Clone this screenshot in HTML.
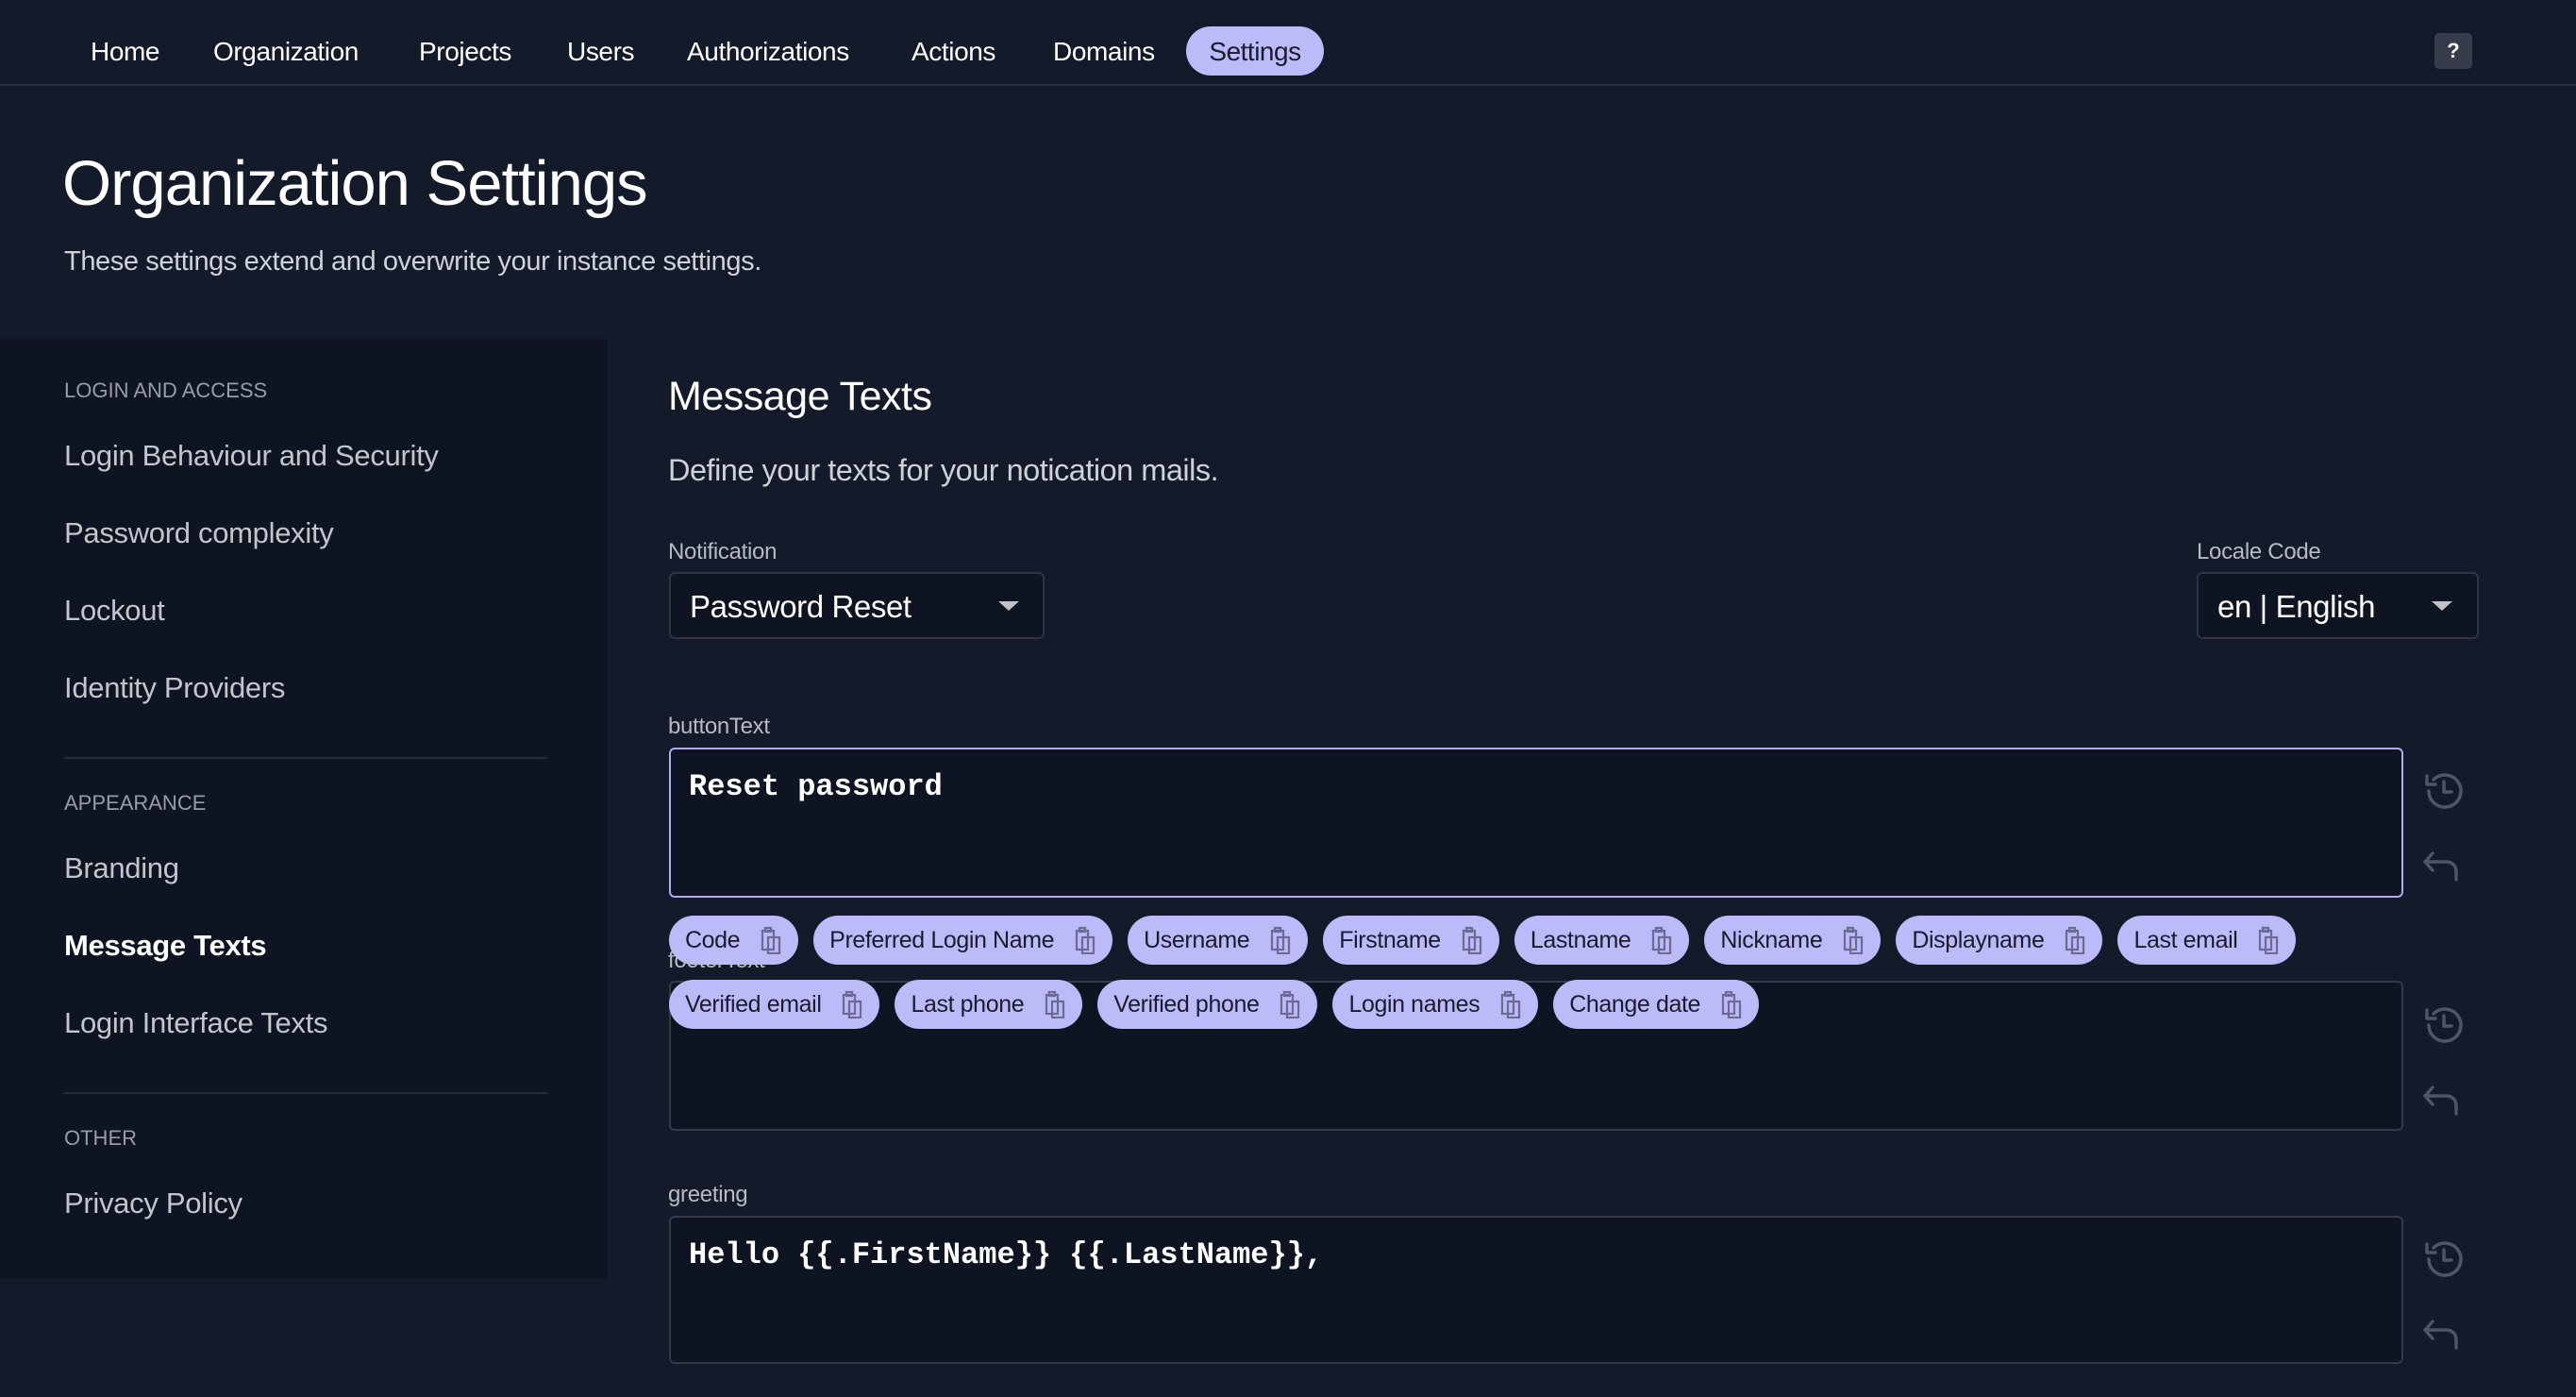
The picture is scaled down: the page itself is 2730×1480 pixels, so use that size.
<!DOCTYPE html>
<html><head><meta charset="utf-8"><style>
*{box-sizing:border-box;margin:0;padding:0}
body{width:2730px;height:1480px;background:#131a2a;color:#fff;font-family:"Liberation Sans",sans-serif;position:relative;overflow:hidden}
.a{position:absolute;white-space:nowrap}
.nav{left:0;top:0;width:2730px;height:91px;border-bottom:2px solid #2c3240}
.ni{font-size:28px;top:39px;color:#fff;letter-spacing:-0.4px}
.pill{left:1257px;top:28px;width:146px;height:52px;border-radius:26px;background:#bcbaf8;color:#1a1c2e;font-size:28px;text-align:center;line-height:54px;letter-spacing:-0.5px}
.q{left:2580px;top:35px;width:40px;height:38px;background:#363c4a;border-radius:5px;font-size:22px;text-align:center;line-height:38px;font-weight:bold}
.side{left:0;top:359px;width:644px;height:996px;background:#0f1422}
.sh{font-size:22px;color:#9a9ca5;left:68px}
.si{font-size:31px;color:#c3c5cb;left:68px;letter-spacing:-0.3px}
.div{left:68px;width:512px;height:2px;background:#252b38}
.lbl{font-size:24px;color:#b8bac0;letter-spacing:-0.3px}
.box{border:2px solid #2e3442;border-radius:6px;background:#0f1422}
.ta{left:709px;width:1838px;border:2px solid #333a48;border-radius:6px;background:#0f1422}
.mono{font-family:"Liberation Mono",monospace;font-weight:bold;font-size:32px;color:#fff}
.chips{left:709px;display:flex;gap:16px}
.chip{height:52px;border-radius:26px;background:#bcbaf8;color:#1a1c2e;font-size:25px;display:flex;align-items:center;padding:0 18px 0 17px;gap:22px;letter-spacing:-0.4px}
.chip svg{width:22px;height:30px}
</style></head><body>
<div class="a nav"></div>
<div class="a ni" style="left:96px">Home</div>
<div class="a ni" style="left:226px">Organization</div>
<div class="a ni" style="left:444px">Projects</div>
<div class="a ni" style="left:601px">Users</div>
<div class="a ni" style="left:728px">Authorizations</div>
<div class="a ni" style="left:966px">Actions</div>
<div class="a ni" style="left:1116px">Domains</div>
<div class="a pill">Settings</div>
<div class="a q">?</div>

<div class="a" style="left:66px;top:156px;font-size:67px;letter-spacing:-1px">Organization Settings</div>
<div class="a" style="left:68px;top:261px;font-size:29px;color:#d0d2d8;letter-spacing:-0.4px">These settings extend and overwrite your instance settings.</div>

<div class="a side"></div>
<div class="a sh" style="top:401px">LOGIN AND ACCESS</div>
<div class="a si" style="top:465px">Login Behaviour and Security</div>
<div class="a si" style="top:547px">Password complexity</div>
<div class="a si" style="top:629px">Lockout</div>
<div class="a si" style="top:711px">Identity Providers</div>
<div class="a div" style="top:802px"></div>
<div class="a sh" style="top:838px">APPEARANCE</div>
<div class="a si" style="top:902px">Branding</div>
<div class="a si" style="top:984px;color:#fff;font-weight:bold">Message Texts</div>
<div class="a si" style="top:1066px">Login Interface Texts</div>
<div class="a div" style="top:1157px"></div>
<div class="a sh" style="top:1193px">OTHER</div>
<div class="a si" style="top:1257px">Privacy Policy</div>

<div class="a" style="left:708px;top:396px;font-size:43px;letter-spacing:-0.5px">Message Texts</div>
<div class="a" style="left:708px;top:480px;font-size:32.5px;color:#cfd1d7;letter-spacing:-0.5px">Define your texts for your notication mails.</div>
<div class="a lbl" style="left:708px;top:571px">Notification</div>
<div class="a box" style="left:709px;top:606px;width:398px;height:71px"></div>
<div class="a" style="left:731px;top:624px;font-size:33px;letter-spacing:-0.4px">Password Reset</div>
<div class="a" style="left:1058px;top:637px;width:0;height:0;border-left:11px solid transparent;border-right:11px solid transparent;border-top:10px solid #c0c2c8"></div>
<div class="a lbl" style="left:2328px;top:571px">Locale Code</div>
<div class="a box" style="left:2328px;top:606px;width:299px;height:71px"></div>
<div class="a" style="left:2350px;top:624px;font-size:33px;letter-spacing:-0.4px">en | English</div>
<div class="a" style="left:2577px;top:637px;width:0;height:0;border-left:11px solid transparent;border-right:11px solid transparent;border-top:10px solid #c0c2c8"></div>

<div class="a lbl" style="left:708px;top:756px">buttonText</div>
<div class="a ta" style="top:792px;height:159px;border-color:#aeacf0"></div>
<div class="a mono" style="left:730px;top:815px">Reset password</div>

<div class="a lbl" style="left:708px;top:1004px">footerText</div>
<div class="a ta" style="top:1039px;height:159px"></div>

<div class="a lbl" style="left:708px;top:1252px">greeting</div>
<div class="a ta" style="top:1288px;height:157px"></div>
<div class="a mono" style="left:730px;top:1311px">Hello {{.FirstName}} {{.LastName}},</div>

<svg class="a" style="left:0;top:0" width="2730" height="1480" fill="none" stroke="#4f5562" stroke-width="3.5" stroke-linecap="round" stroke-linejoin="round">
<g id="h"><path d="M2574 838a17 17 0 1 0 5-12"/><path d="M2572 822v9h9"/><path d="M2590 828v11h8"/></g>
<g id="u"><path d="M2578 904l-8 9 8 9"/><path d="M2571 913h22a10 10 0 0 1 10 10v9"/></g>
<use href="#h" y="248"/><use href="#u" y="248"/><use href="#h" y="496"/><use href="#u" y="496"/>
</svg>

<div class="a chips" style="top:970px">
<div class="chip">Code<svg viewBox="0 0 22 30"><g fill="none" stroke="#6d6b94" stroke-width="2.2"><rect x="2" y="5" width="12" height="20"/><rect x="8" y="12" width="12" height="17"/><rect x="5" y="2" width="6" height="4"/></g></svg></div>
<div class="chip">Preferred Login Name<svg viewBox="0 0 22 30"><g fill="none" stroke="#6d6b94" stroke-width="2.2"><rect x="2" y="5" width="12" height="20"/><rect x="8" y="12" width="12" height="17"/><rect x="5" y="2" width="6" height="4"/></g></svg></div>
<div class="chip">Username<svg viewBox="0 0 22 30"><g fill="none" stroke="#6d6b94" stroke-width="2.2"><rect x="2" y="5" width="12" height="20"/><rect x="8" y="12" width="12" height="17"/><rect x="5" y="2" width="6" height="4"/></g></svg></div>
<div class="chip">Firstname<svg viewBox="0 0 22 30"><g fill="none" stroke="#6d6b94" stroke-width="2.2"><rect x="2" y="5" width="12" height="20"/><rect x="8" y="12" width="12" height="17"/><rect x="5" y="2" width="6" height="4"/></g></svg></div>
<div class="chip">Lastname<svg viewBox="0 0 22 30"><g fill="none" stroke="#6d6b94" stroke-width="2.2"><rect x="2" y="5" width="12" height="20"/><rect x="8" y="12" width="12" height="17"/><rect x="5" y="2" width="6" height="4"/></g></svg></div>
<div class="chip">Nickname<svg viewBox="0 0 22 30"><g fill="none" stroke="#6d6b94" stroke-width="2.2"><rect x="2" y="5" width="12" height="20"/><rect x="8" y="12" width="12" height="17"/><rect x="5" y="2" width="6" height="4"/></g></svg></div>
<div class="chip">Displayname<svg viewBox="0 0 22 30"><g fill="none" stroke="#6d6b94" stroke-width="2.2"><rect x="2" y="5" width="12" height="20"/><rect x="8" y="12" width="12" height="17"/><rect x="5" y="2" width="6" height="4"/></g></svg></div>
<div class="chip">Last email<svg viewBox="0 0 22 30"><g fill="none" stroke="#6d6b94" stroke-width="2.2"><rect x="2" y="5" width="12" height="20"/><rect x="8" y="12" width="12" height="17"/><rect x="5" y="2" width="6" height="4"/></g></svg></div>
</div>
<div class="a chips" style="top:1038px">
<div class="chip">Verified email<svg viewBox="0 0 22 30"><g fill="none" stroke="#6d6b94" stroke-width="2.2"><rect x="2" y="5" width="12" height="20"/><rect x="8" y="12" width="12" height="17"/><rect x="5" y="2" width="6" height="4"/></g></svg></div>
<div class="chip">Last phone<svg viewBox="0 0 22 30"><g fill="none" stroke="#6d6b94" stroke-width="2.2"><rect x="2" y="5" width="12" height="20"/><rect x="8" y="12" width="12" height="17"/><rect x="5" y="2" width="6" height="4"/></g></svg></div>
<div class="chip">Verified phone<svg viewBox="0 0 22 30"><g fill="none" stroke="#6d6b94" stroke-width="2.2"><rect x="2" y="5" width="12" height="20"/><rect x="8" y="12" width="12" height="17"/><rect x="5" y="2" width="6" height="4"/></g></svg></div>
<div class="chip">Login names<svg viewBox="0 0 22 30"><g fill="none" stroke="#6d6b94" stroke-width="2.2"><rect x="2" y="5" width="12" height="20"/><rect x="8" y="12" width="12" height="17"/><rect x="5" y="2" width="6" height="4"/></g></svg></div>
<div class="chip">Change date<svg viewBox="0 0 22 30"><g fill="none" stroke="#6d6b94" stroke-width="2.2"><rect x="2" y="5" width="12" height="20"/><rect x="8" y="12" width="12" height="17"/><rect x="5" y="2" width="6" height="4"/></g></svg></div>
</div>
</body></html>
